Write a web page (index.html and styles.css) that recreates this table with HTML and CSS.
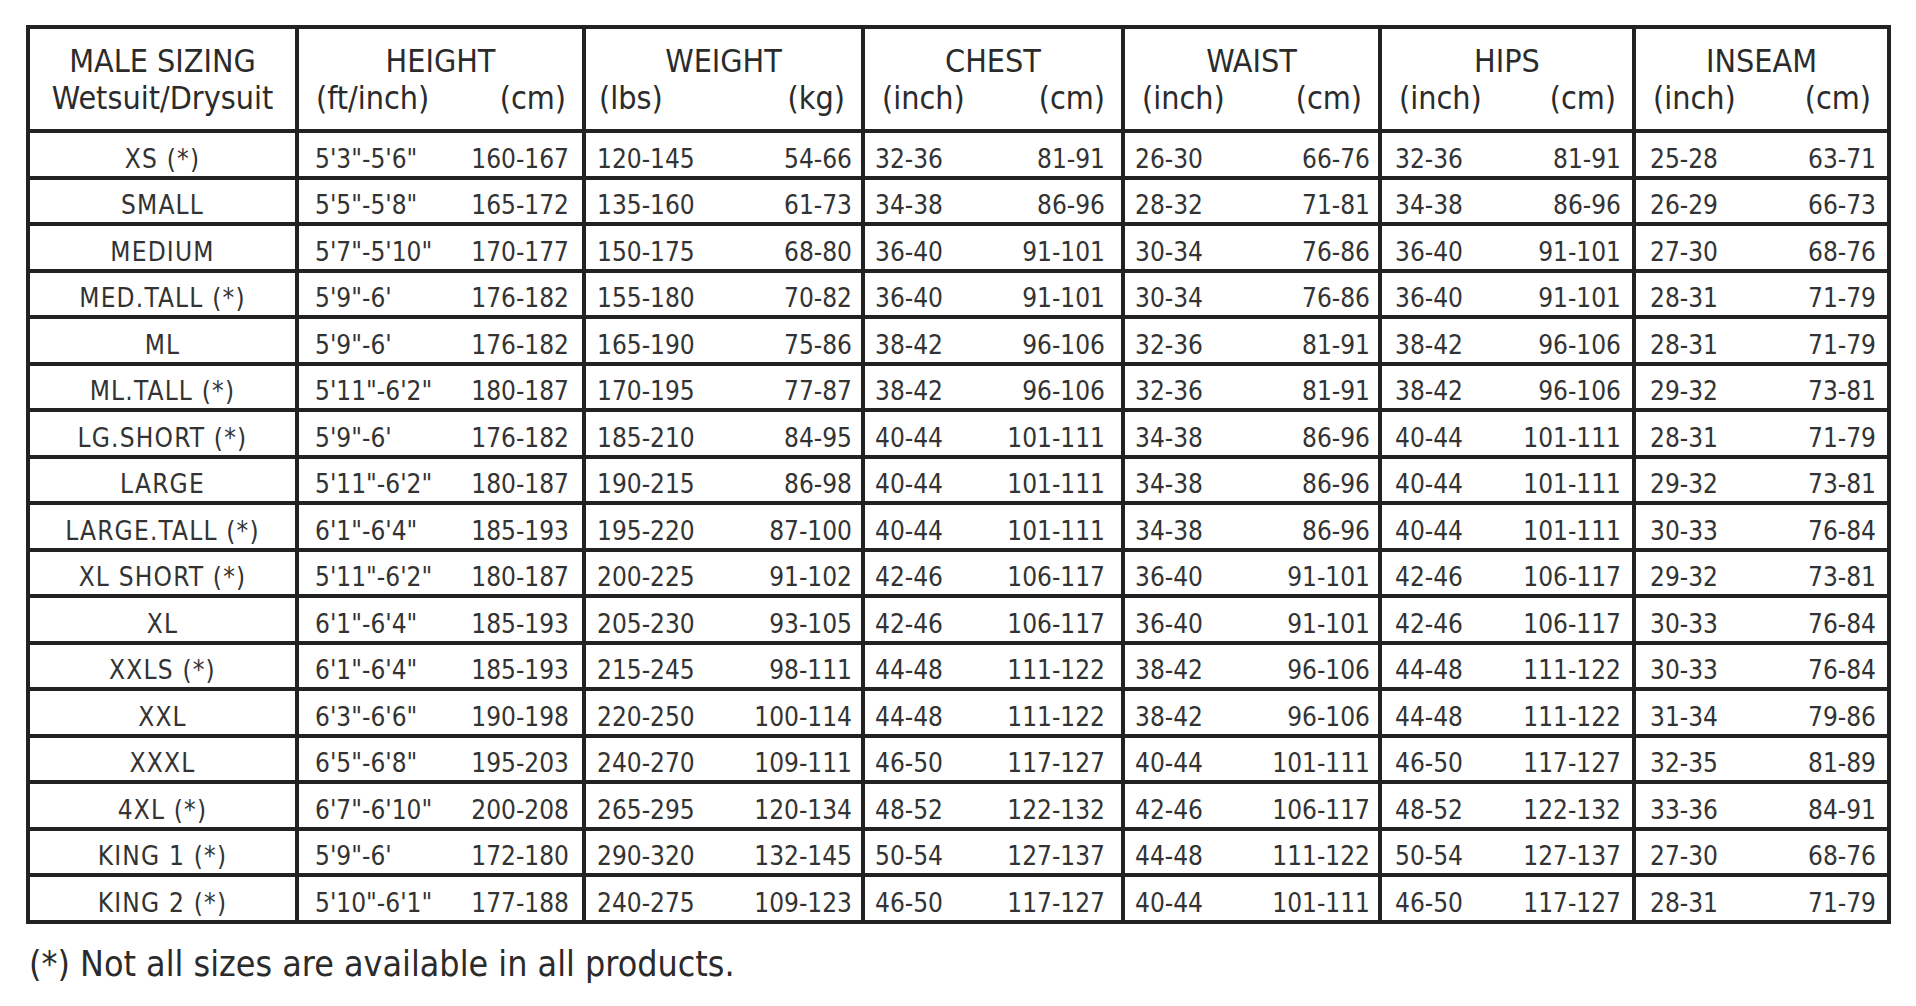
FILE: index.html
```html
<!DOCTYPE html>
<html lang="en">
<head>
<meta charset="utf-8">
<title>Male Sizing</title>
<link rel="stylesheet" href="styles.css">
</head>
<body>
<div class="page">
  <table class="size-table">
    <colgroup>
      <col class="w-size">
      <col class="w-height">
      <col class="w-weight">
      <col class="w-chest">
      <col class="w-waist">
      <col class="w-hips">
      <col class="w-inseam">
    </colgroup>
    <thead>
      <tr>
        <th class="size"><span class="title">MALE SIZING</span><span class="title">Wetsuit/Drysuit</span></th>
        <th><span class="title">HEIGHT</span><span class="units"><span>(ft/inch)</span><span>(cm)</span></span></th>
        <th><span class="title">WEIGHT</span><span class="units u-weight"><span>(lbs)</span><span>(kg)</span></span></th>
        <th><span class="title">CHEST</span><span class="units"><span>(inch)</span><span>(cm)</span></span></th>
        <th><span class="title">WAIST</span><span class="units"><span>(inch)</span><span>(cm)</span></span></th>
        <th><span class="title">HIPS</span><span class="units"><span>(inch)</span><span>(cm)</span></span></th>
        <th><span class="title">INSEAM</span><span class="units"><span>(inch)</span><span>(cm)</span></span></th>
      </tr>
    </thead>
    <tbody>
      <tr><td class="size">XS (*)</td><td class="g-height"><div class="pair"><span>5'3"-5'6"</span><span>160-167</span></div></td><td class="g-weight"><div class="pair"><span>120-145</span><span>54-66</span></div></td><td class="g-chest"><div class="pair"><span>32-36</span><span>81-91</span></div></td><td class="g-waist"><div class="pair"><span>26-30</span><span>66-76</span></div></td><td class="g-hips"><div class="pair"><span>32-36</span><span>81-91</span></div></td><td class="g-inseam"><div class="pair"><span>25-28</span><span>63-71</span></div></td></tr>
      <tr><td class="size">SMALL</td><td class="g-height"><div class="pair"><span>5'5"-5'8"</span><span>165-172</span></div></td><td class="g-weight"><div class="pair"><span>135-160</span><span>61-73</span></div></td><td class="g-chest"><div class="pair"><span>34-38</span><span>86-96</span></div></td><td class="g-waist"><div class="pair"><span>28-32</span><span>71-81</span></div></td><td class="g-hips"><div class="pair"><span>34-38</span><span>86-96</span></div></td><td class="g-inseam"><div class="pair"><span>26-29</span><span>66-73</span></div></td></tr>
      <tr><td class="size">MEDIUM</td><td class="g-height"><div class="pair"><span>5'7"-5'10"</span><span>170-177</span></div></td><td class="g-weight"><div class="pair"><span>150-175</span><span>68-80</span></div></td><td class="g-chest"><div class="pair"><span>36-40</span><span>91-101</span></div></td><td class="g-waist"><div class="pair"><span>30-34</span><span>76-86</span></div></td><td class="g-hips"><div class="pair"><span>36-40</span><span>91-101</span></div></td><td class="g-inseam"><div class="pair"><span>27-30</span><span>68-76</span></div></td></tr>
      <tr><td class="size">MED.TALL (*)</td><td class="g-height"><div class="pair"><span>5'9"-6'</span><span>176-182</span></div></td><td class="g-weight"><div class="pair"><span>155-180</span><span>70-82</span></div></td><td class="g-chest"><div class="pair"><span>36-40</span><span>91-101</span></div></td><td class="g-waist"><div class="pair"><span>30-34</span><span>76-86</span></div></td><td class="g-hips"><div class="pair"><span>36-40</span><span>91-101</span></div></td><td class="g-inseam"><div class="pair"><span>28-31</span><span>71-79</span></div></td></tr>
      <tr><td class="size">ML</td><td class="g-height"><div class="pair"><span>5'9"-6'</span><span>176-182</span></div></td><td class="g-weight"><div class="pair"><span>165-190</span><span>75-86</span></div></td><td class="g-chest"><div class="pair"><span>38-42</span><span>96-106</span></div></td><td class="g-waist"><div class="pair"><span>32-36</span><span>81-91</span></div></td><td class="g-hips"><div class="pair"><span>38-42</span><span>96-106</span></div></td><td class="g-inseam"><div class="pair"><span>28-31</span><span>71-79</span></div></td></tr>
      <tr><td class="size">ML.TALL (*)</td><td class="g-height"><div class="pair"><span>5'11"-6'2"</span><span>180-187</span></div></td><td class="g-weight"><div class="pair"><span>170-195</span><span>77-87</span></div></td><td class="g-chest"><div class="pair"><span>38-42</span><span>96-106</span></div></td><td class="g-waist"><div class="pair"><span>32-36</span><span>81-91</span></div></td><td class="g-hips"><div class="pair"><span>38-42</span><span>96-106</span></div></td><td class="g-inseam"><div class="pair"><span>29-32</span><span>73-81</span></div></td></tr>
      <tr><td class="size">LG.SHORT (*)</td><td class="g-height"><div class="pair"><span>5'9"-6'</span><span>176-182</span></div></td><td class="g-weight"><div class="pair"><span>185-210</span><span>84-95</span></div></td><td class="g-chest"><div class="pair"><span>40-44</span><span>101-111</span></div></td><td class="g-waist"><div class="pair"><span>34-38</span><span>86-96</span></div></td><td class="g-hips"><div class="pair"><span>40-44</span><span>101-111</span></div></td><td class="g-inseam"><div class="pair"><span>28-31</span><span>71-79</span></div></td></tr>
      <tr><td class="size">LARGE</td><td class="g-height"><div class="pair"><span>5'11"-6'2"</span><span>180-187</span></div></td><td class="g-weight"><div class="pair"><span>190-215</span><span>86-98</span></div></td><td class="g-chest"><div class="pair"><span>40-44</span><span>101-111</span></div></td><td class="g-waist"><div class="pair"><span>34-38</span><span>86-96</span></div></td><td class="g-hips"><div class="pair"><span>40-44</span><span>101-111</span></div></td><td class="g-inseam"><div class="pair"><span>29-32</span><span>73-81</span></div></td></tr>
      <tr><td class="size">LARGE.TALL (*)</td><td class="g-height"><div class="pair"><span>6'1"-6'4"</span><span>185-193</span></div></td><td class="g-weight"><div class="pair"><span>195-220</span><span>87-100</span></div></td><td class="g-chest"><div class="pair"><span>40-44</span><span>101-111</span></div></td><td class="g-waist"><div class="pair"><span>34-38</span><span>86-96</span></div></td><td class="g-hips"><div class="pair"><span>40-44</span><span>101-111</span></div></td><td class="g-inseam"><div class="pair"><span>30-33</span><span>76-84</span></div></td></tr>
      <tr><td class="size">XL SHORT (*)</td><td class="g-height"><div class="pair"><span>5'11"-6'2"</span><span>180-187</span></div></td><td class="g-weight"><div class="pair"><span>200-225</span><span>91-102</span></div></td><td class="g-chest"><div class="pair"><span>42-46</span><span>106-117</span></div></td><td class="g-waist"><div class="pair"><span>36-40</span><span>91-101</span></div></td><td class="g-hips"><div class="pair"><span>42-46</span><span>106-117</span></div></td><td class="g-inseam"><div class="pair"><span>29-32</span><span>73-81</span></div></td></tr>
      <tr><td class="size">XL</td><td class="g-height"><div class="pair"><span>6'1"-6'4"</span><span>185-193</span></div></td><td class="g-weight"><div class="pair"><span>205-230</span><span>93-105</span></div></td><td class="g-chest"><div class="pair"><span>42-46</span><span>106-117</span></div></td><td class="g-waist"><div class="pair"><span>36-40</span><span>91-101</span></div></td><td class="g-hips"><div class="pair"><span>42-46</span><span>106-117</span></div></td><td class="g-inseam"><div class="pair"><span>30-33</span><span>76-84</span></div></td></tr>
      <tr><td class="size">XXLS (*)</td><td class="g-height"><div class="pair"><span>6'1"-6'4"</span><span>185-193</span></div></td><td class="g-weight"><div class="pair"><span>215-245</span><span>98-111</span></div></td><td class="g-chest"><div class="pair"><span>44-48</span><span>111-122</span></div></td><td class="g-waist"><div class="pair"><span>38-42</span><span>96-106</span></div></td><td class="g-hips"><div class="pair"><span>44-48</span><span>111-122</span></div></td><td class="g-inseam"><div class="pair"><span>30-33</span><span>76-84</span></div></td></tr>
      <tr><td class="size">XXL</td><td class="g-height"><div class="pair"><span>6'3"-6'6"</span><span>190-198</span></div></td><td class="g-weight"><div class="pair"><span>220-250</span><span>100-114</span></div></td><td class="g-chest"><div class="pair"><span>44-48</span><span>111-122</span></div></td><td class="g-waist"><div class="pair"><span>38-42</span><span>96-106</span></div></td><td class="g-hips"><div class="pair"><span>44-48</span><span>111-122</span></div></td><td class="g-inseam"><div class="pair"><span>31-34</span><span>79-86</span></div></td></tr>
      <tr><td class="size">XXXL</td><td class="g-height"><div class="pair"><span>6'5"-6'8"</span><span>195-203</span></div></td><td class="g-weight"><div class="pair"><span>240-270</span><span>109-111</span></div></td><td class="g-chest"><div class="pair"><span>46-50</span><span>117-127</span></div></td><td class="g-waist"><div class="pair"><span>40-44</span><span>101-111</span></div></td><td class="g-hips"><div class="pair"><span>46-50</span><span>117-127</span></div></td><td class="g-inseam"><div class="pair"><span>32-35</span><span>81-89</span></div></td></tr>
      <tr><td class="size">4XL (*)</td><td class="g-height"><div class="pair"><span>6'7"-6'10"</span><span>200-208</span></div></td><td class="g-weight"><div class="pair"><span>265-295</span><span>120-134</span></div></td><td class="g-chest"><div class="pair"><span>48-52</span><span>122-132</span></div></td><td class="g-waist"><div class="pair"><span>42-46</span><span>106-117</span></div></td><td class="g-hips"><div class="pair"><span>48-52</span><span>122-132</span></div></td><td class="g-inseam"><div class="pair"><span>33-36</span><span>84-91</span></div></td></tr>
      <tr><td class="size">KING 1 (*)</td><td class="g-height"><div class="pair"><span>5'9"-6'</span><span>172-180</span></div></td><td class="g-weight"><div class="pair"><span>290-320</span><span>132-145</span></div></td><td class="g-chest"><div class="pair"><span>50-54</span><span>127-137</span></div></td><td class="g-waist"><div class="pair"><span>44-48</span><span>111-122</span></div></td><td class="g-hips"><div class="pair"><span>50-54</span><span>127-137</span></div></td><td class="g-inseam"><div class="pair"><span>27-30</span><span>68-76</span></div></td></tr>
      <tr><td class="size">KING 2 (*)</td><td class="g-height"><div class="pair"><span>5'10"-6'1"</span><span>177-188</span></div></td><td class="g-weight"><div class="pair"><span>240-275</span><span>109-123</span></div></td><td class="g-chest"><div class="pair"><span>46-50</span><span>117-127</span></div></td><td class="g-waist"><div class="pair"><span>40-44</span><span>101-111</span></div></td><td class="g-hips"><div class="pair"><span>46-50</span><span>117-127</span></div></td><td class="g-inseam"><div class="pair"><span>28-31</span><span>71-79</span></div></td></tr>
    </tbody>
  </table>
  <p class="footnote">(*) Not all sizes are available in all products.</p>
</div>
</body>
</html>
```

FILE: styles.css
```css
html, body {
  margin: 0;
  padding: 0;
  background: #ffffff;
}

body {
  font-family: "DejaVu Sans Condensed", "DejaVu Sans", "Liberation Sans", sans-serif;
  font-stretch: condensed;
  color: #333333;
}

.page {
  padding: 25px 0 0 26px;
}

.size-table {
  border-collapse: collapse;
  table-layout: fixed;
  width: 1865px;
  border: 4px solid #222222;
}

.w-size { width: 269px; }
.w-height { width: 287px; }
.w-weight { width: 279px; }
.w-chest { width: 260px; }
.w-waist { width: 257px; }
.w-hips { width: 254px; }
.w-inseam { width: 255px; }

.size-table th,
.size-table td {
  border: 4px solid #222222;
  padding: 0;
}

.size-table th {
  font-weight: normal;
  font-size: 32px;
  line-height: 37px;
  padding-top: 14px;
  padding-bottom: 12px;
  vertical-align: top;
  color: #2b2b2b;
}

.title {
  display: block;
  text-align: center;
  white-space: nowrap;
}

.units {
  display: flex;
  justify-content: space-between;
  padding: 0 16px 0 17px;
  white-space: nowrap;
}

.units.u-weight {
  padding-left: 13px;
}

.size-table tbody tr {
  height: 46.5px;
}

.size-table td {
  font-size: 26px;
  line-height: 27px;
  vertical-align: bottom;
  padding-bottom: 3px;
  white-space: nowrap;
}

.size-table td.size {
  text-align: center;
  letter-spacing: 1.2px;
}

.pair {
  display: flex;
  justify-content: space-between;
}

.g-height .pair { padding: 0 13px 0 16px; }
.g-weight .pair { padding: 0 9px 0 11px; }
.g-chest .pair { padding: 0 16px 0 10px; }
.g-waist .pair { padding: 0 8px 0 10px; }
.g-hips .pair { padding: 0 11px 0 13px; }
.g-inseam .pair { padding: 0 11px 0 14px; }

.footnote {
  margin: 20px 0 0 3px;
  font-size: 35.5px;
  line-height: 40px;
  color: #2b2b2b;
}
```
